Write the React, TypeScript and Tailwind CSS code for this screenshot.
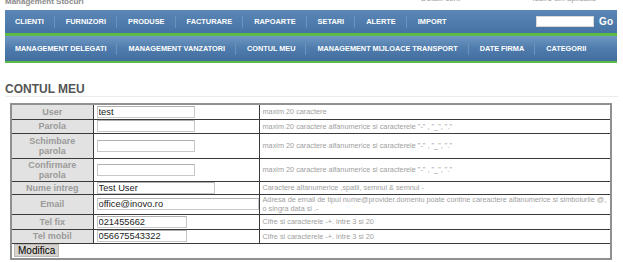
import React from "react";

const nav1 = ["CLIENTI", "FURNIZORI", "PRODUSE", "FACTURARE", "RAPOARTE", "SETARI", "ALERTE", "IMPORT"];
const nav2 = ["MANAGEMENT DELEGATI", "MANAGEMENT VANZATORI", "CONTUL MEU", "MANAGEMENT MIJLOACE TRANSPORT", "DATE FIRMA", "CATEGORII"];

type Row = {
  label: React.ReactNode;
  value: string;
  w: string;
  desc: React.ReactNode;
  h: string;
};

const altDesc = 'maxim 20 caractere alfanumerice si caracterele "-" , "_", "."';

const rows: Row[] = [
  { label: "User", value: "test", w: "w-[98px]", desc: "maxim 20 caractere", h: "h-[15px]" },
  { label: "Parola", value: "", w: "w-[98px]", desc: altDesc, h: "h-[14px]" },
  { label: <>Schimbare<br />parola</>, value: "", w: "w-[98px]", desc: altDesc, h: "h-[25px]" },
  { label: <>Confirmare<br />parola</>, value: "", w: "w-[98px]", desc: altDesc, h: "h-[23px]" },
  { label: "Nume intreg", value: "Test User", w: "w-[118px]", desc: "Caractere alfanumerice ,spatii, semnul & semnul -", h: "h-[13px]" },
  {
    label: "Email",
    value: "office@inovo.ro",
    w: "w-[162px]",
    desc: (
      <>
        Adresa de email de tipul nume@provider.domeniu poate contine careactere alfanumerice si simbolurile @,
        <br />o singra data si .-
      </>
    ),
    h: "h-[20px]",
  },
  { label: "Tel fix", value: "021455662", w: "w-[90px]", desc: "Cifre si caracterele -+. intre 3 si 20", h: "h-[15px]" },
  { label: "Tel mobil", value: "056675543322", w: "w-[90px]", desc: "Cifre si caracterele -+. intre 3 si 20", h: "h-[14px]" },
];

export default function App() {
  return (
    <div className="w-[623px] h-[262px] overflow-hidden bg-white font-['Liberation_Sans',Arial,sans-serif]">
      {/* top strip (cut off) */}
      <div className="h-[10px] overflow-hidden flex items-start">
        <div className="ml-[5px] -mt-[3px] text-[8px] leading-[10px] font-bold text-[#8a8a8a]">Management Stocuri</div>
        <div className="ml-[337px] -mt-[6px] text-[8px] leading-[10px] text-[#a0a0a0]">Detalii cont</div>
        <div className="ml-[72px] -mt-[6px] text-[8px] leading-[10px] text-[#a0a0a0]">Iesire din aplicatie</div>
      </div>

      {/* nav */}
      <div className="mx-[5px] w-[612px]">
        <div className="h-[23px] flex items-center bg-gradient-to-b from-[#5a87b6] to-[#4673a3]">
          <div className="flex items-center pl-[10px]">
            {nav1.map((n, i) => (
              <div
                key={n}
                className={
                  "text-[7.4px] font-bold text-white leading-[12px] " +
                  (i === 0 ? "pr-[10px]" : "pl-[11px] pr-[10px] border-l border-[#6a92bc]")
                }
              >
                {n}
              </div>
            ))}
          </div>
          <input
            readOnly
            className="ml-auto w-[58px] h-[11px] bg-white border border-[#d8d8d8] outline-none"
          />
          <div className="ml-[5px] mr-[4px] text-[10px] font-bold text-white leading-[12px]">Go</div>
        </div>
        <div className="h-[3px] bg-[#5cbb45]" />
        <div className="h-[25px] flex items-center bg-gradient-to-b from-[#6f98c3] via-[#4f7cac] to-[#416e9f] pl-[10px]">
          {nav2.map((n, i) => (
            <div
              key={n}
              className={
                "text-[7.3px] font-bold text-white leading-[12px] " +
                (i === 0 ? "pr-[10px]" : "pl-[11px] pr-[10px] border-l border-[#6a92bc]")
              }
            >
              {n}
            </div>
          ))}
        </div>
        <div className="h-[2px] bg-[#5cbb45]" />
      </div>

      {/* heading */}
      <div className="mx-[5px] mt-[19px] border-b border-[#ececec] text-[12px] leading-[14px] font-bold text-[#555555]">
        CONTUL MEU
      </div>

      {/* form table */}
      <table className="ml-[10px] mt-[6px] w-[602px] table-fixed border-collapse border-2 border-[#909090]">
        <colgroup>
          <col className="w-[82px]" />
          <col className="w-[166px]" />
          <col />
        </colgroup>
        <tbody>
          {rows.map((r, i) => (
            <tr key={i} className={r.h}>
              <td className="p-0 border border-[#3a3a3a] bg-[#e2e2e2] text-center align-middle text-[9px] leading-[10px] font-bold text-[#9a9a9a]">
                {r.label}
              </td>
              <td className="p-0 pl-[3px] border border-[#3a3a3a] align-middle">
                <input
                  readOnly
                  value={r.value}
                  className={
                    r.w +
                    " block h-[12px] px-[1px] border border-[#c8c8c8] border-t-[#b0b0b0] bg-white text-[9.3px] leading-[11px] text-[#222] outline-none font-['Liberation_Sans',Arial,sans-serif]"
                  }
                />
              </td>
              <td className="p-0 pl-[3px] border border-[#3a3a3a] align-middle text-[7.3px] leading-[9px] text-[#a0a0a0]">
                {r.desc}
              </td>
            </tr>
          ))}
          <tr className="h-[16px]">
            <td colSpan={3} className="p-0 pl-[2px] border border-[#3a3a3a] align-middle">
              <button className="block h-[13px] px-[3px] bg-[#d6d3ce] border border-[#bdbab5] text-[10px] leading-[11px] text-black">
                Modifica
              </button>
            </td>
          </tr>
        </tbody>
      </table>
    </div>
  );
}
